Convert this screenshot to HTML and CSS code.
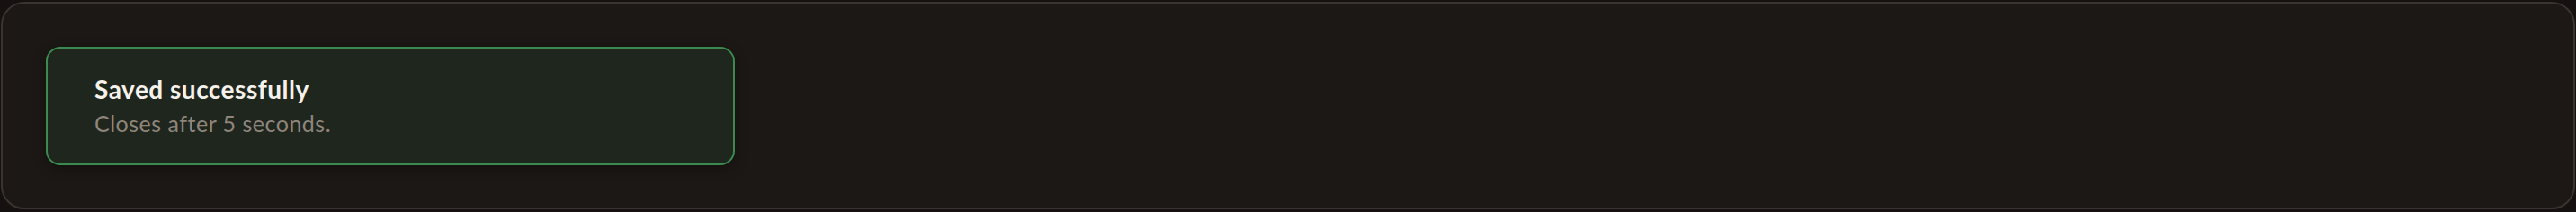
FILE: index.html
```html
<!DOCTYPE html>
<html lang="en">
<head>
    <meta charset="UTF-8">
    <meta name="viewport" content="width=device-width, initial-scale=1.0">
    <title>Toast</title>
    <link rel="stylesheet" href="styles.css">
</head>
<body>
    <div class="frame">
        <div class="toast">
            <h3 class="toast-title">Saved successfully</h3>
            <p class="toast-text">Closes after 5 seconds.</p>
        </div>
    </div>
</body>
</html>
```

FILE: styles.css
```css
* {
    box-sizing: border-box;
}

html,
body {
    height: 100%;
}

body {
    margin: 0;
    padding: 2px 1px 3px;
    font-family: Lato, "Noto Sans", sans-serif;
    background-color: #141110;
}

.frame {
    height: 100%;
    padding: 48px;
    background-color: #1c1815;
    border: 2px solid #3a332f;
    border-radius: 26px;
}

.toast {
    width: 766px;
    padding: 27px 52px 29px;
    background-color: #1f261e;
    border: 2px solid #3b8a4f;
    border-radius: 16px;
    box-shadow: 0 4px 14px rgba(0, 0, 0, 0.35);
}

.toast-title {
    margin: 0 0 4px;
    font-size: 28px;
    line-height: 36px;
    font-weight: 700;
    letter-spacing: 0.5px;
    color: #f6f1ea;
}

.toast-text {
    margin: 0;
    font-size: 25px;
    line-height: 32px;
    letter-spacing: 0.5px;
    color: #8f857b;
}
```
